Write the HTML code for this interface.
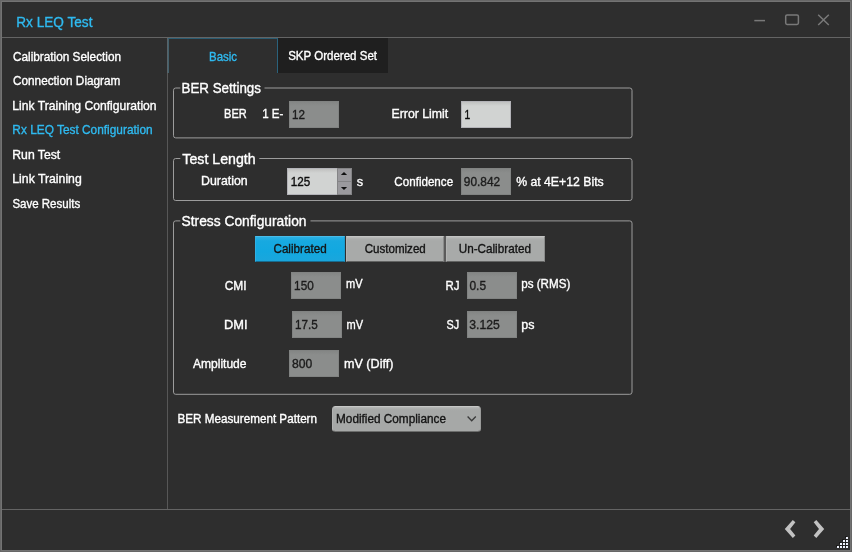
<!DOCTYPE html>
<html lang="en">
<head>
<meta charset="utf-8">
<title>Rx LEQ Test</title>
<style>
html,body{margin:0;padding:0;}
body{width:852px;height:552px;overflow:hidden;background:#2e2e2e;font-family:"Liberation Sans",sans-serif;font-size:12.6px;color:#f4f4f4;}
#win{position:relative;width:852px;height:552px;overflow:hidden;will-change:transform;}
#frame{position:absolute;left:0;top:0;width:850px;height:550px;border:1px solid #676767;box-shadow:inset 0 0 0 1px #737373;z-index:50;}
.a{position:absolute;}
.t{position:absolute;white-space:nowrap;line-height:16px;height:16px;transform-origin:0 50%;-webkit-text-stroke:0.35px currentColor;}
.title{font-size:14.0px;}
.nav,.lbl,.val{font-size:12.2px;}
.leg{font-size:13.8px;}
.inp{position:absolute;box-sizing:border-box;border:1px solid #b3b3b8;background:linear-gradient(#c0c1c0 0,#d1d3d2 4px,#d1d3d2 100%);}
.inp.dis{border-color:#818382;background:linear-gradient(#848685 0,#8b8d8c 4px,#8b8d8c 100%);}
.btn{position:absolute;box-sizing:border-box;top:236px;height:26px;background:linear-gradient(#bcbdbc 0,#acaead 2px,#a8aaa9 4px,#a8aaa9 100%);border:1px solid;border-color:#c3c4c3 #8b8c8b #626362 #b3b4b3;}
.btn.on{background:linear-gradient(#2bb0e4 0,#17a9e0 4px,#12a8e0 60%,#1aa6dc 100%);border-color:#49bbe8 #1b9ccf #176c90 #2fb0e4;}
</style>
</head>
<body>
<div id="win">
<div id="frame"></div>
<svg class="a" style="left:750px;top:8px" width="90" height="24" viewBox="0 0 90 24">
<path d="M4.3 12.6 H15" stroke="#797979" stroke-width="1.5" fill="none"/>
<rect x="35.7" y="6.9" width="12.7" height="9.5" rx="1.4" ry="1.4" stroke="#797979" stroke-width="1.5" fill="none"/>
<path d="M68.2 6.8 L78.8 17 M78.8 6.8 L68.2 17" stroke="#797979" stroke-width="1.5" fill="none"/>
</svg>
<div class="a" style="left:2px;top:37px;width:848px;height:1px;background:#646464"></div>
<div class="a" style="left:167px;top:38px;width:1px;height:471px;background:#575757"></div>
<div class="a" style="left:167px;top:38px;width:1px;height:35px;background:#596368"></div>
<div class="a" style="left:168px;top:38px;width:110px;height:35px;box-sizing:border-box;border:1px solid;border-color:#2a5c72 #2a627c #2a627c #42606c;border-bottom:none"></div>
<div class="a" style="left:278px;top:38px;width:110px;height:35px;background:#1f1f1f"></div>
<svg class="a" style="left:0;top:0" width="852" height="552" viewBox="0 0 852 552" fill="none" stroke="#9c9c9c" stroke-width="1">
<path d="M264.5 88 H629.8 A2.2 2.2 0 0 1 632 90.2 V135.7 A2.2 2.2 0 0 1 629.8 137.9 H175.7 A2.2 2.2 0 0 1 173.5 135.7 V90.2 A2.2 2.2 0 0 1 175.7 88 H180.3"/>
<path d="M259.3 158.5 H629.8 A2.2 2.2 0 0 1 632 160.7 V198.3 A2.2 2.2 0 0 1 629.8 200.5 H175.7 A2.2 2.2 0 0 1 173.5 198.3 V160.7 A2.2 2.2 0 0 1 175.7 158.5 H180.3"/>
<path d="M310.5 220.9 H629.8 A2.2 2.2 0 0 1 632 223.1 V392.1 A2.2 2.2 0 0 1 629.8 394.3 H175.7 A2.2 2.2 0 0 1 173.5 392.1 V223.1 A2.2 2.2 0 0 1 175.7 220.9 H180.3"/>
</svg>
<div class="inp dis" style="left:289px;top:101px;width:50px;height:27px"></div>
<div class="inp" style="left:461px;top:101px;width:50px;height:27px"></div>
<div class="inp" style="left:287px;top:168px;width:51px;height:27px"></div>
<div class="inp dis" style="left:461px;top:168px;width:50px;height:27px"></div>
<div class="inp dis" style="left:291px;top:272px;width:50px;height:27px"></div>
<div class="inp dis" style="left:467px;top:272px;width:50px;height:27px"></div>
<div class="inp dis" style="left:292px;top:311px;width:50px;height:27px"></div>
<div class="inp dis" style="left:467px;top:311px;width:50px;height:27px"></div>
<div class="inp dis" style="left:289px;top:350px;width:50px;height:27px"></div>
<div class="a" style="left:337px;top:168px;width:15px;height:27px;box-sizing:border-box;background:#9b9a9e;border:1px solid #848486"></div>
<div class="a" style="left:337px;top:181px;width:15px;height:1px;background:#848486"></div>
<svg class="a" style="left:337px;top:168px" width="15" height="27" viewBox="0 0 15 27"><path d="M3.9 7.1 L7 3.9 L10.1 7.1 Z M3.9 18.9 L10.1 18.9 L7 22.1 Z" fill="#101010"/></svg>
<div class="btn on" style="left:255px;width:90px"></div>
<div class="btn" style="left:346px;width:98px"></div>
<div class="a" style="left:444px;top:236px;width:2px;height:26px;background:#5b5b5b"></div>
<div class="btn" style="left:446px;width:99px"></div>
<div class="a" style="left:332px;top:406px;width:149px;height:26px;box-sizing:border-box;border:1px solid;border-color:#c6c7c6 #9a9b9a #6c6d6c #b2b3b2;border-radius:3.5px;background:linear-gradient(#b6b8b7 0,#a9abaa 2px,#a6a8a7 4px,#a6a8a7 100%)"></div>
<svg class="a" style="left:464px;top:412px" width="16" height="14" viewBox="0 0 16 14"><path d="M3.6 4.5 L7.7 8.8 L11.8 4.5" stroke="#3a3a3a" stroke-width="1.3" fill="none"/></svg>
<div class="t title" style="left:16px;top:13px;color:#2fbaf0;transform:translate(0.27px,0.7px) scaleX(0.9722)">Rx LEQ Test</div>
<div class="t nav" style="left:12px;top:49px;color:#ffffff;transform:translate(0.96px,0px) scaleX(0.9671)">Calibration Selection</div>
<div class="t nav" style="left:12px;top:73px;color:#ffffff;transform:translate(0.96px,0px) scaleX(0.9672)">Connection Diagram</div>
<div class="t nav" style="left:12px;top:98px;color:#ffffff;transform:translate(0.3px,0px) scaleX(0.9952)">Link Training Configuration</div>
<div class="t nav" style="left:12px;top:122px;color:#2fbaf0;transform:translate(0.33px,0px) scaleX(0.9741)">Rx LEQ Test Configuration</div>
<div class="t nav" style="left:12px;top:146px;color:#ffffff;transform:translate(0.3px,0.5px) scaleX(1.0018)">Run Test</div>
<div class="t nav" style="left:12px;top:171px;color:#ffffff;transform:translate(0.3px,0px) scaleX(1.0048)">Link Training</div>
<div class="t nav" style="left:12px;top:196px;color:#ffffff;transform:translate(0.44px,0px) scaleX(0.9429)">Save Results</div>
<div class="t lbl" style="left:209px;top:49px;color:#2fbaf0;transform:translate(0.06px,0px) scaleX(0.9393)">Basic</div>
<div class="t lbl" style="left:288px;top:48px;color:#ffffff;transform:translate(0.14px,0px) scaleX(0.9462)">SKP Ordered Set</div>
<div class="t leg" style="left:181px;top:81px;color:#ffffff;transform:translate(0.49px,0px) scaleX(0.9684)">BER Settings</div>
<div class="t leg" style="left:182px;top:151px;color:#ffffff;transform:translate(0.37px,0.5px) scaleX(1.0259)">Test Length</div>
<div class="t leg" style="left:181px;top:213px;color:#ffffff;transform:translate(0.56px,0.8px) scaleX(0.9995)">Stress Configuration</div>
<div class="t lbl" style="left:224px;top:106px;color:#ffffff;transform:translate(0.1px,0px) scaleX(0.9043)">BER</div>
<div class="t lbl" style="left:262px;top:106px;color:#ffffff;transform:translate(0.22px,0px) scaleX(0.9495)">1 E-</div>
<div class="t val" style="left:291px;top:107px;color:#1c1c1c;transform:translate(0.92px,0px) scaleX(0.9537)">12</div>
<div class="t lbl" style="left:391px;top:106px;color:#ffffff;transform:translate(0.49px,0px) scaleX(1.0087)">Error Limit</div>
<div class="t val" style="left:464px;top:107px;color:#0c0c0c;transform:translate(0.49px,0px) scaleX(0.8405)">1</div>
<div class="t lbl" style="left:200px;top:173px;color:#ffffff;transform:translate(0.99px,0px) scaleX(1.0136)">Duration</div>
<div class="t val" style="left:290px;top:174px;color:#0c0c0c;transform:translate(0.72px,0px) scaleX(0.957)">125</div>
<div class="t lbl" style="left:356px;top:174px;color:#ffffff;transform:translate(0.75px,0px) scaleX(1.0438)">s</div>
<div class="t lbl" style="left:394px;top:174px;color:#ffffff;transform:translate(0.36px,0px) scaleX(0.9524)">Confidence</div>
<div class="t val" style="left:463px;top:174px;color:#1c1c1c;transform:translate(0.87px,0px) scaleX(0.9737)">90.842</div>
<div class="t lbl" style="left:516px;top:174px;color:#ffffff;transform:translate(0.14px,0px) scaleX(1.0053)">% at 4E+12 Bits</div>
<div class="t lbl" style="left:273px;top:240px;color:#141414;transform:translate(0.46px,0.6px) scaleX(0.9572)">Calibrated</div>
<div class="t lbl" style="left:364px;top:240px;color:#141414;transform:translate(0.66px,0.6px) scaleX(0.9495)">Customized</div>
<div class="t lbl" style="left:458px;top:240px;color:#141414;transform:translate(0.69px,0.6px) scaleX(0.9607)">Un-Calibrated</div>
<div class="t lbl" style="left:224px;top:278px;color:#ffffff;transform:translate(0.65px,0px) scaleX(0.9782)">CMI</div>
<div class="t val" style="left:294px;top:278px;color:#1c1c1c;transform:translate(0.11px,0px) scaleX(0.965)">150</div>
<div class="t lbl" style="left:346px;top:276px;color:#ffffff;transform:translate(0.08px,0px) scaleX(0.9054)">mV</div>
<div class="t lbl" style="left:445px;top:278px;color:#ffffff;transform:translate(0.56px,0px) scaleX(0.9404)">RJ</div>
<div class="t val" style="left:469px;top:278px;color:#1c1c1c;transform:translate(0.45px,0px) scaleX(0.9794)">0.5</div>
<div class="t lbl" style="left:521px;top:276px;color:#ffffff;transform:translate(0.27px,0px) scaleX(0.9518)">ps (RMS)</div>
<div class="t lbl" style="left:223px;top:317px;color:#ffffff;transform:translate(0.95px,0px) scaleX(1.0526)">DMI</div>
<div class="t val" style="left:294px;top:317px;color:#1c1c1c;transform:translate(0.92px,0px) scaleX(0.9595)">17.5</div>
<div class="t lbl" style="left:346px;top:317px;color:#ffffff;transform:translate(0.58px,0px) scaleX(0.9054)">mV</div>
<div class="t lbl" style="left:446px;top:317px;color:#ffffff;transform:translate(0.47px,0px) scaleX(0.8901)">SJ</div>
<div class="t val" style="left:469px;top:317px;color:#1c1c1c;transform:translate(0.3px,0px) scaleX(0.9979)">3.125</div>
<div class="t lbl" style="left:521px;top:317px;color:#ffffff;transform:translate(0.24px,0px) scaleX(1.0246)">ps</div>
<div class="t lbl" style="left:192px;top:356px;color:#ffffff;transform:translate(0.92px,0px) scaleX(0.9889)">Amplitude</div>
<div class="t val" style="left:291px;top:356px;color:#1c1c1c;transform:translate(0.9px,0px) scaleX(0.9961)">800</div>
<div class="t lbl" style="left:344px;top:356px;color:#ffffff;transform:translate(0.02px,0px) scaleX(1.0315)">mV (Diff)</div>
<div class="t lbl" style="left:177px;top:410px;color:#ffffff;transform:translate(0.54px,0.5px) scaleX(0.9576)">BER Measurement Pattern</div>
<div class="t lbl" style="left:336px;top:410px;color:#141414;transform:translate(0.03px,0.5px) scaleX(0.9656)">Modified Compliance</div>
<div class="a" style="left:2px;top:509px;width:848px;height:1px;background:#646464"></div>
<svg class="a" style="left:776px;top:514px" width="60" height="30" viewBox="776 514 60 30">
<polygon points="784.8,528.9 792.8,520.0 795.4,522.3 790.1,528.9 795.4,535.5 792.8,538.1" fill="#c2c2c2"/>
<polygon points="824.2,528.9 816.3,520.0 813.7,522.3 819.0,528.9 813.7,535.5 816.3,538.1" fill="#c2c2c2"/>
</svg>
<svg class="a" style="left:835px;top:535px" width="15" height="15" viewBox="0 0 15 15" shape-rendering="crispEdges"><g fill="#1b1b1b"><rect x="10" y="1" width="2" height="2"/><rect x="7" y="4" width="2" height="2"/><rect x="10" y="4" width="2" height="2"/><rect x="4" y="7" width="2" height="2"/><rect x="7" y="7" width="2" height="2"/><rect x="10" y="7" width="2" height="2"/><rect x="1" y="10" width="2" height="2"/><rect x="4" y="10" width="2" height="2"/><rect x="7" y="10" width="2" height="2"/><rect x="10" y="10" width="2" height="2"/></g><g fill="#eef1fb"><rect x="11" y="2" width="2" height="2"/><rect x="8" y="5" width="2" height="2"/><rect x="11" y="5" width="2" height="2"/><rect x="5" y="8" width="2" height="2"/><rect x="8" y="8" width="2" height="2"/><rect x="11" y="8" width="2" height="2"/><rect x="2" y="11" width="2" height="2"/><rect x="5" y="11" width="2" height="2"/><rect x="8" y="11" width="2" height="2"/><rect x="11" y="11" width="2" height="2"/></g></svg>
</div>
</body>
</html>
